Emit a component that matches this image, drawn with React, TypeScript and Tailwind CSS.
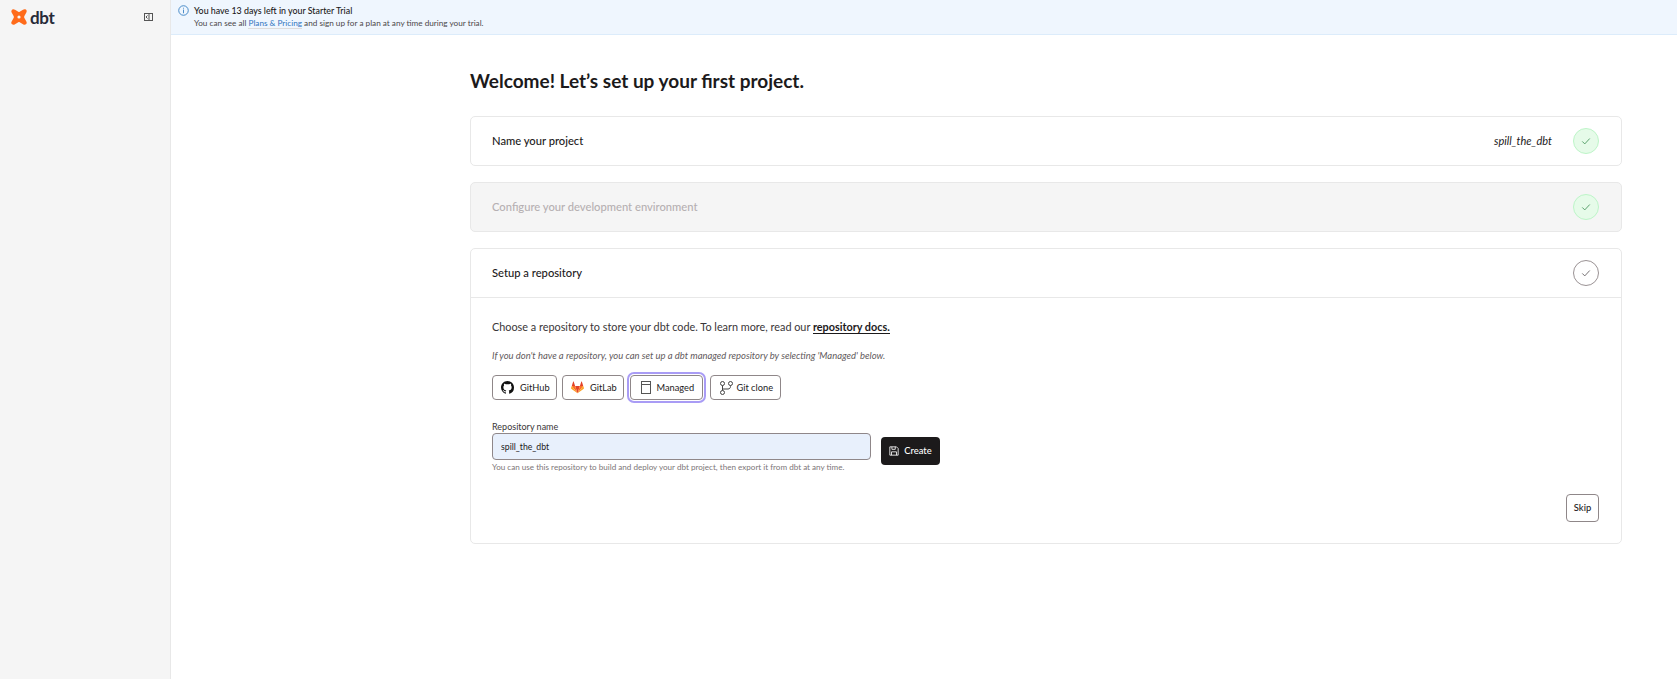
import React from "react";

function Check({ className }: { className: string }) {
  return (
    <svg width="10" height="10" viewBox="0 0 12 12" fill="none" className={className}>
      <path d="M1.5 6.5 4.5 9.5 10.5 3" stroke="currentColor" strokeWidth="1.1" />
    </svg>
  );
}

function Status({ done }: { done: boolean }) {
  return done ? (
    <div className="flex h-[26px] w-[26px] items-center justify-center rounded-full border border-[#bdf5c8] bg-[#e6fbe9]">
      <Check className="text-[#4f9a63]" />
    </div>
  ) : (
    <div className="flex h-[26px] w-[26px] items-center justify-center rounded-full border border-[#9a9294] bg-white">
      <Check className="text-[#6b6668]" />
    </div>
  );
}

function DbtLogo() {
  return (
    <svg width="16" height="16" viewBox="0 0 24 24">
      <path
        fill="#ff6b1a"
        d="M2.2 0.6C3.4 0.1 4.6 .3 6 1.1L11 4.1C11.7 4.5 12.3 4.5 13 4.1L18 1.1C19.6 .1 21 .1 22.2 .9 23.6 2 24 3.7 23 5.4L19.9 11C19.6 11.6 19.6 12.4 19.9 13L23 18.6C24 20.3 23.7 21.9 22.4 23 21.2 24 19.6 23.9 18 22.9L13 19.9C12.3 19.5 11.7 19.5 11 19.9L6 22.9C4.4 23.9 2.9 24 1.6 23 .3 21.9 0 20.3 1 18.6L4.1 13C4.4 12.4 4.4 11.6 4.1 11L1 5.4C0 3.6.6 1.6 2.2.6Z"
      />
      <circle cx="12" cy="12" r="2.4" fill="#f5f5f5" />
    </svg>
  );
}

function GitHubIcon() {
  return (
    <svg className="shrink-0" width="13" height="13" viewBox="0 0 16 16" fill="#111">
      <path d="M8 0C3.58 0 0 3.58 0 8c0 3.54 2.29 6.53 5.47 7.59.4.07.55-.17.55-.38 0-.19-.01-.82-.01-1.49-2.01.37-2.53-.49-2.69-.94-.09-.23-.48-.94-.82-1.13-.28-.15-.68-.52-.01-.53.63-.01 1.08.58 1.23.82.72 1.21 1.87.87 2.33.66.07-.52.28-.87.51-1.07-1.78-.2-3.64-.89-3.64-3.95 0-.87.31-1.59.82-2.15-.08-.2-.36-1.02.08-2.12 0 0 .67-.21 2.2.82.64-.18 1.32-.27 2-.27s1.36.09 2 .27c1.53-1.04 2.2-.82 2.2-.82.44 1.1.16 1.92.08 2.12.51.56.82 1.27.82 2.15 0 3.07-1.87 3.75-3.65 3.95.29.25.54.73.54 1.48 0 1.07-.01 1.93-.01 2.2 0 .21.15.46.55.38A8.01 8.01 0 0 0 16 8c0-4.42-3.58-8-8-8Z" />
    </svg>
  );
}

function GitLabIcon() {
  return (
    <svg className="shrink-0" width="13" height="13" viewBox="0 0 24 24">
      <path fill="#e24329" d="M12 22.5 16.4 9H7.6L12 22.5Z" />
      <path fill="#fc6d26" d="M12 22.5 7.6 9H1.4L12 22.5Z" />
      <path fill="#fca326" d="M1.4 9 .1 13.1c-.1.4 0 .8.3 1L12 22.5 1.4 9Z" />
      <path fill="#e24329" d="M1.4 9h6.2L4.9 1c-.1-.4-.7-.4-.9 0L1.4 9Z" />
      <path fill="#fc6d26" d="M12 22.5 16.4 9h6.2L12 22.5Z" />
      <path fill="#fca326" d="M22.6 9l1.3 4.1c.1.4 0 .8-.3 1L12 22.5 22.6 9Z" />
      <path fill="#e24329" d="M22.6 9h-6.2L19.1 1c.1-.4.7-.4.9 0L22.6 9Z" />
    </svg>
  );
}

function ManagedIcon() {
  return (
    <svg className="shrink-0" width="10" height="13" viewBox="0 0 10 13" fill="none" stroke="#555" strokeWidth="1">
      <rect x="0.5" y="0.5" width="9" height="12" />
      <path d="M0.5 3.5h9" />
    </svg>
  );
}

function BranchIcon() {
  return (
    <svg className="shrink-0" width="13" height="14" viewBox="0 0 13 14" fill="none" stroke="#444" strokeWidth="1">
      <circle cx="2.5" cy="2.5" r="2" />
      <circle cx="10.5" cy="2.5" r="2" />
      <circle cx="2.5" cy="11.5" r="2" />
      <path d="M2.5 4.5v5M10.5 4.5v1c0 1.5-1 2.5-2.5 2.5H2.5" />
    </svg>
  );
}

function RepoButton({ children, selected, className }: { children: React.ReactNode; selected?: boolean; className: string }) {
  return (
    <button
      className={`flex h-[25px] items-center rounded-[4px] border border-[#8f8789] bg-white text-[9.25px] whitespace-nowrap text-[#1c1a1b] ${selected ? "shadow-[0_0_0_1px_#ffffff,0_0_0_3px_#a99cf5]" : ""} ${className}`}
    >
      {children}
    </button>
  );
}

function Row({ title, right, muted, done }: { title: string; right?: string; muted?: boolean; done: boolean }) {
  return (
    <div
      className={`flex h-[50px] items-center rounded-[5px] border border-[#e8e8e8] pl-[21px] pr-[22px] ${muted ? "bg-[#f5f5f5]" : "bg-white"}`}
    >
      <span className={`text-[11.2px] font-medium ${muted ? "text-[#b5b0b2]" : "text-[#1c1a1b]"}`}>{title}</span>
      <span className="ml-auto mr-[21px] text-[11px] italic text-[#1c1a1b]">{right}</span>
      <Status done={done} />
    </div>
  );
}

export default function App() {
  return (
    <div
      className="flex h-[679px] w-[1677px] overflow-hidden bg-white text-[#1c1a1b]"
      style={{ fontFamily: 'Lato, "Noto Sans", sans-serif' }}
    >
      <aside className="w-[171px] shrink-0 border-r border-[#e8e8e8] bg-[#f5f5f5]">
        <div className="flex h-[34px] items-center pl-[11px] pr-[17px]">
          <DbtLogo />
          <span className="ml-[3px] text-[17px] leading-none font-bold tracking-[-0.3px] text-[#262a38]">dbt</span>
          <svg className="ml-auto" width="9" height="8" viewBox="0 0 9 8" fill="none" stroke="#555" strokeWidth="1">
            <rect x="0.5" y="0.5" width="8" height="7" />
            <path d="M5 1v6M3.5 2.5 2 4l1.5 1.5" />
          </svg>
        </div>
      </aside>
      <main className="flex min-w-0 flex-1 flex-col">
        <div className="flex h-[35px] border-b border-[#dcecfb] bg-[#eff6fe] pl-[7px] pt-[4px]">
          <svg className="mt-[1px]" width="11" height="11" viewBox="0 0 12 12" fill="none" stroke="#3b82c4" strokeWidth="1">
            <circle cx="6" cy="6" r="5.2" />
            <path d="M6 5v4M6 3v1" />
          </svg>
          <div className="ml-[5px]">
            <div className="text-[8.85px] leading-[13px] font-medium text-[#1c1a1b]">You have 13 days left in your Starter Trial</div>
            <div className="text-[8.2px] leading-[12px] text-[#4b4749]">
              You can see all <span className="border-b border-[#dcdcdc] text-[#2f74c0]">Plans &amp; Pricing</span> and sign up for a plan at any time during your trial.
            </div>
          </div>
        </div>
        <div className="flex-1 pl-[299px] pr-[55px] pt-[32px]">
          <h1 className="text-[19px] leading-[27px] font-bold text-[#1c1a1b]">Welcome! Let’s set up your first project.</h1>
          <div className="mt-[22px] flex flex-col gap-[16px]">
            <Row title="Name your project" right="spill_the_dbt" done />
            <Row title="Configure your development environment" muted done />
            <section className="rounded-[5px] border border-[#e8e8e8] bg-white">
              <div className="flex h-[49px] items-center border-b border-[#e8e8e8] pl-[21px] pr-[22px]">
                <span className="text-[11.2px] font-medium">Setup a repository</span>
                <div className="ml-auto">
                  <Status done={false} />
                </div>
              </div>
              <div className="pl-[21px] pr-[22px] pt-[21px] pb-[21px]">
                <p className="text-[10.85px] leading-[16px] text-[#3a3638]">
                  Choose a repository to store your dbt code. To learn more, read our{" "}
                  <span className="border-b border-[#1c1a1b] font-bold text-[#1c1a1b]">repository docs.</span>
                </p>
                <p className="mt-[15px] text-[9.45px] leading-[12px] italic text-[#5f5a5c]">
                  If you don't have a repository, you can set up a dbt managed repository by selecting 'Managed' below.
                </p>
                <div className="mt-[13px] flex items-center">
                  <RepoButton className="w-[65px] gap-[6px] pl-[8px]"><GitHubIcon />GitHub</RepoButton>
                  <RepoButton className="ml-[5px] w-[62px] gap-[6px] pl-[8px]"><GitLabIcon />GitLab</RepoButton>
                  <RepoButton selected className="ml-[5.5px] w-[73px] gap-[6px] pl-[10px]"><ManagedIcon />Managed</RepoButton>
                  <RepoButton className="ml-[7px] w-[71px] gap-[4px] pl-[9px]"><BranchIcon />Git clone</RepoButton>
                </div>
                <div className="mt-[20px] flex items-start">
                  <div className="w-[379px]">
                    <div className="text-[9px] leading-[13px] text-[#3a3638]">Repository name</div>
                    <input
                      readOnly
                      value="spill_the_dbt"
                      className="block h-[27px] w-full rounded-[4px] border border-[#8f8789] bg-[#e8f0fc] px-[8px] text-[8.7px] text-[#1c1a1b] outline-none"
                    />
                    <div className="mt-[2px] text-[8.1px] leading-[11px] text-[#7d7678]">
                      You can use this repository to build and deploy your dbt project, then export it from dbt at any time.
                    </div>
                  </div>
                  <button className="ml-[10px] mt-[17px] flex h-[28px] w-[59px] items-center justify-center gap-[5px] rounded-[4px] bg-[#1c1a1b] text-[9.4px] font-medium text-white">
                    <svg width="10" height="10" viewBox="0 0 12 12" fill="none" stroke="#fff" strokeWidth="1">
                      <path d="M1 1h8l2 2v8H1Z" />
                      <path d="M3.5 1v3h4V1M3 11V7h6v4" />
                    </svg>
                    Create
                  </button>
                </div>
                <div className="mt-[21px] flex justify-end">
                  <button className="h-[28px] w-[33px] rounded-[4px] border border-[#8f8789] bg-white text-[9.4px] font-medium">Skip</button>
                </div>
              </div>
            </section>
          </div>
        </div>
      </main>
    </div>
  );
}
